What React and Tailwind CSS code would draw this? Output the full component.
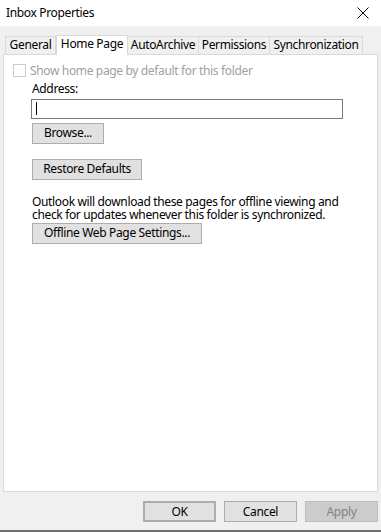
import React from "react";

const tabs = [
  { name: "General", w: "w-[51px]" },
  { name: "Home Page", w: "w-[72px]", active: true },
  { name: "AutoArchive", w: "w-[72px]" },
  { name: "Permissions", w: "w-[72px]" },
  { name: "Synchronization", w: "w-[94px]" },
];

const Button = ({ children, className = "" }) => (
  <button
    className={`h-[21px] border border-[#adadad] bg-[#e1e1e1] text-[12px] text-black leading-none flex items-center justify-center ${className}`}
  >
    {children}
  </button>
);

const App = () => {
  return (
    <div
      className="w-[381px] h-[532px] bg-[#f0f0f0] flex flex-col text-[12px] text-black tracking-[-0.35px]"
      style={{ fontFamily: '"Segoe UI", "Noto Sans", sans-serif' }}
    >
      {/* title bar */}
      <div className="h-[26px] bg-white flex items-center justify-between pl-[6px] pr-[12px]">
        <span className="text-[12px]">Inbox Properties</span>
        <svg width="12" height="12" viewBox="0 0 12 12" className="mt-[1px]">
          <path d="M0.5 0.5 L11.5 11.5 M11.5 0.5 L0.5 11.5" stroke="#000" strokeWidth="1" />
        </svg>
      </div>

      {/* tabs */}
      <div className="flex items-end pl-[5px] h-[28px]">
        {tabs.map((t) =>
          t.active ? (
            <div
              key={t.name}
              className={`${t.w} h-[20px] bg-white border border-b-0 border-[#d9d9d9] -mb-px z-10 flex items-center justify-center pb-[3px]`}
            >
              {t.name}
            </div>
          ) : (
            <div
              key={t.name}
              className={`${t.w} h-[18px] bg-[#f0f0f0] border border-b-0 border-[#d9d9d9] -ml-px first:ml-0 flex items-center justify-center`}
            >
              {t.name}
            </div>
          )
        )}
      </div>

      {/* panel */}
      <div className="mx-[3px] w-[375px] h-[439px] bg-white border border-[#d9d9d9] pt-[9px] pl-[9px] flex flex-col">
        <div className="flex items-center h-[13px]">
          <span className="w-[13px] h-[13px] border border-[#cccccc] bg-white" />
          <span className="ml-[4px] text-[#a0a0a0] leading-[13px]">
            Show home page by default for this folder
          </span>
        </div>

        <div className="pl-[19px] flex flex-col items-start">
          <span className="mt-[5px] h-[14px] leading-[14px]">Address:</span>
          <div className="mt-[3px] -ml-px w-[312px] h-[20px] border border-[#7a7a7a] bg-white flex items-center pl-[4px]">
            <span className="w-px h-[13px] bg-black" />
          </div>
          <Button className="mt-[4px] w-[72px]">Browse...</Button>
          <Button className="mt-[15px] w-[110px]">Restore Defaults</Button>

          <p className="mt-[15px] h-[26px] leading-[13px]">
            Outlook will download these pages for offline viewing and
            <br />
            check for updates whenever this folder is synchronized.
          </p>
          <Button className="mt-[2px] w-[170px]">Offline Web Page Settings...</Button>
        </div>
      </div>

      {/* footer */}
      <div className="flex justify-end gap-[8px] pr-[3px] pt-[9px] h-[38px]">
        <Button className="w-[73px] border-2 border-[#0078d7]">OK</Button>
        <Button className="w-[73px]">Cancel</Button>
        <button className="w-[73px] h-[21px] border border-[#bfbfbf] bg-[#cccccc] text-[#838383] text-[12px] leading-none flex items-center justify-center">
          Apply
        </button>
      </div>
      <div className="h-[2px] bg-[#6f6f6f]" />
    </div>
  );
};

export default App;
